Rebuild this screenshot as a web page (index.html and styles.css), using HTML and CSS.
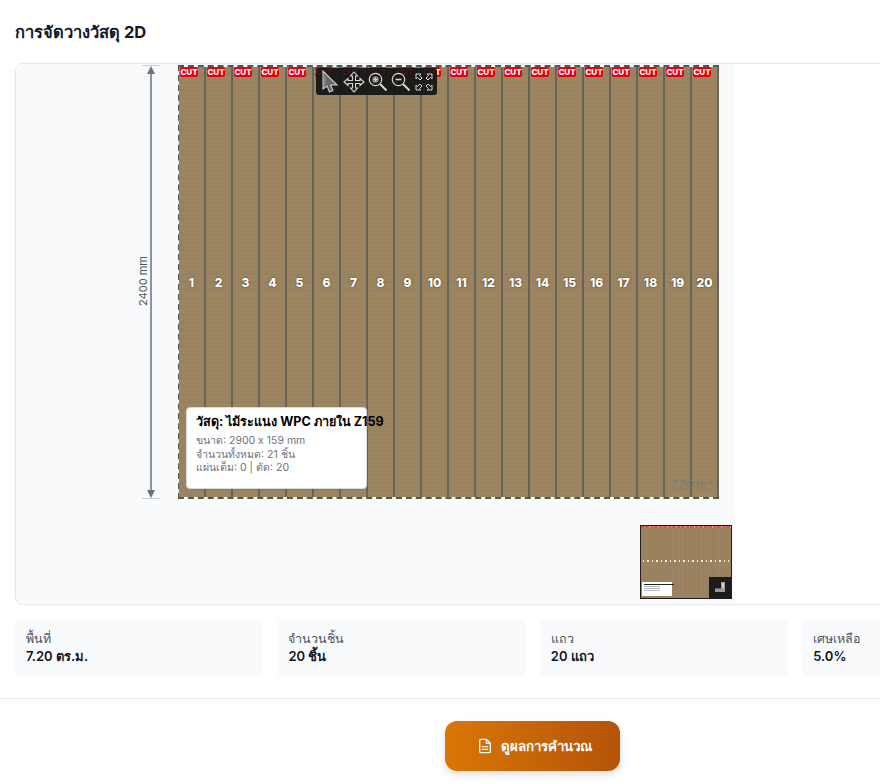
FILE: index.html
```html
<!DOCTYPE html>
<html lang="th">
<head>
    <meta charset="UTF-8">
    <meta name="viewport" content="width=device-width, initial-scale=1.0">
    <title>การจัดวางวัสดุ 2D</title>
    <link rel="stylesheet" href="styles.css">
</head>
<body>
    <div id="page">
        <h2 id="title">การจัดวางวัสดุ 2D</h2>

        <div id="viewer">
            <div id="canvas">
                <svg class="dim-line" width="20" height="436" viewBox="0 0 20 436">
                    <path d="M1 1.500H19M1 434.500H19" stroke="#c9ccd3" stroke-width="1" fill="none"/>
                    <path d="M10 6V430" stroke="#6b7280" stroke-width="1.500" fill="none"/>
                    <path d="M10 2L14 10H6ZM10 434L14 426H6Z" fill="#6b7280"/>
                </svg>
                <div class="dim-label">2400 mm</div>

                <div id="board">
                    <div class="strip"><span class="cut">CUT</span><span class="num">1</span></div>
                    <div class="strip"><span class="cut">CUT</span><span class="num">2</span></div>
                    <div class="strip"><span class="cut">CUT</span><span class="num">3</span></div>
                    <div class="strip"><span class="cut">CUT</span><span class="num">4</span></div>
                    <div class="strip"><span class="cut">CUT</span><span class="num">5</span></div>
                    <div class="strip"><span class="cut">CUT</span><span class="num">6</span></div>
                    <div class="strip"><span class="cut">CUT</span><span class="num">7</span></div>
                    <div class="strip"><span class="cut">CUT</span><span class="num">8</span></div>
                    <div class="strip"><span class="cut">CUT</span><span class="num">9</span></div>
                    <div class="strip"><span class="cut">CUT</span><span class="num">10</span></div>
                    <div class="strip"><span class="cut">CUT</span><span class="num">11</span></div>
                    <div class="strip"><span class="cut">CUT</span><span class="num">12</span></div>
                    <div class="strip"><span class="cut">CUT</span><span class="num">13</span></div>
                    <div class="strip"><span class="cut">CUT</span><span class="num">14</span></div>
                    <div class="strip"><span class="cut">CUT</span><span class="num">15</span></div>
                    <div class="strip"><span class="cut">CUT</span><span class="num">16</span></div>
                    <div class="strip"><span class="cut">CUT</span><span class="num">17</span></div>
                    <div class="strip"><span class="cut">CUT</span><span class="num">18</span></div>
                    <div class="strip"><span class="cut">CUT</span><span class="num">19</span></div>
                    <div class="strip"><span class="cut">CUT</span><span class="num">20</span></div>
                    <div class="area-note">7.20 m²</div>
                </div>

                <div id="legend">
                    <div class="legend-title">วัสดุ: ไม้ระแนง WPC ภายใน Z159</div>
                    <div class="legend-line">ขนาด: 2900 x 159 mm</div>
                    <div class="legend-line">จำนวนทั้งหมด: 21 ชิ้น</div>
                    <div class="legend-line">แผ่นเต็ม: 0 | ตัด: 20</div>
                </div>

                <div id="toolbar">
                    <svg width="20" height="24" viewBox="0 0 20 24" fill="none" stroke="#cfcfcf" stroke-width="1.100">
                        <path d="M3 1L3 19L7 16L9.500 22L13 20.500L10.500 15L17 15Z" fill="#666"/>
                        <path d="M5 6V15" stroke="#999"/>
                    </svg>
                    <svg width="22" height="22" viewBox="0 0 22 22" fill="none" stroke="#d6d6d6" stroke-width="1.100">
                        <path d="M11 1L14.500 5H12.500V9.500H17V7.500L21 11L17 14.500V12.500H12.500V17H14.500L11 21L7.500 17H9.500V12.500H5V14.500L1 11L5 7.500V9.500H9.500V5H7.500Z"/>
                    </svg>
                    <svg width="20" height="20" viewBox="0 0 20 20" fill="none" stroke="#d6d6d6">
                        <circle cx="7.500" cy="7.500" r="6.200" stroke-width="1.200"/>
                        <circle cx="7.500" cy="7.500" r="3.200" fill="#8c8c8c" stroke="none"/>
                        <path d="M5.500 7.500H9.500M7.500 5.500V9.500" stroke-width="1"/>
                        <path d="M12 12L18.500 18.500" stroke-width="2"/>
                    </svg>
                    <svg width="20" height="20" viewBox="0 0 20 20" fill="none" stroke="#d6d6d6">
                        <circle cx="7.500" cy="7.500" r="6.200" stroke-width="1.200"/>
                        <path d="M4.500 7.500H10.500" stroke-width="1.500"/>
                        <path d="M12 12L18.500 18.500" stroke-width="2"/>
                    </svg>
                    <svg width="20" height="20" viewBox="0 0 20 20" fill="none" stroke="#d6d6d6" stroke-width="1">
                        <path d="M2 2H7L5.500 3.500L8 6L6 8L3.500 5.500L2 7Z"/>
                        <path d="M18 2V7L16.500 5.500L14 8L12 6L14.500 3.500L13 2Z"/>
                        <path d="M2 18V13L3.500 14.500L6 12L8 14L5.500 16.500L7 18Z"/>
                        <path d="M18 18H13L14.500 16.500L12 14L14 12L16.500 14.500L18 13Z"/>
                    </svg>
                </div>

                <div id="minimap">
                    <div class="mini-cut"></div>
                    <div class="mini-nums"></div>
                    <div class="mini-legend">
                        <i class="mini-bar dark"></i>
                        <i class="mini-bar"></i>
                        <i class="mini-bar"></i>
                        <i class="mini-bar"></i>
                    </div>
                    <div class="mini-corner">
                        <svg width="12" height="11" viewBox="0 0 12 11"><path d="M7 0H11V10H1V6.500H7Z" fill="#9a9a9a"/><path d="M8 1H10V6H8Z" fill="#cfcfcf"/></svg>
                    </div>
                </div>
            </div>
        </div>

        <div id="stats">
            <div class="stat">
                <div class="stat-label">พื้นที่</div>
                <div class="stat-value">7.20 ตร.ม.</div>
            </div>
            <div class="stat">
                <div class="stat-label">จำนวนชิ้น</div>
                <div class="stat-value">20 ชิ้น</div>
            </div>
            <div class="stat">
                <div class="stat-label">แถว</div>
                <div class="stat-value">20 แถว</div>
            </div>
            <div class="stat">
                <div class="stat-label">เศษเหลือ</div>
                <div class="stat-value">5.0%</div>
            </div>
        </div>

        <div id="actions">
            <button class="action-button">
                <svg width="16" height="16" viewBox="0 0 24 24" fill="none" stroke="#fff" stroke-width="2" stroke-linecap="round" stroke-linejoin="round">
                    <path d="M14 2H6a2 2 0 0 0-2 2v16a2 2 0 0 0 2 2h12a2 2 0 0 0 2-2V8z"/>
                    <path d="M14 2v6h6M8 13h8M8 17h8"/>
                </svg>
                ดูผลการคำนวณ
            </button>
        </div>
    </div>
</body>
</html>
```

FILE: styles.css
```css
html, body {
    margin: 0;
    height: 784px;
    overflow: hidden;
    background: #fff;
    font-family: Inter, "Noto Sans", "DejaVu Sans", sans-serif;
    color: #111827;
}
#page {
    padding: 22px 0 0 15px;
    width: 1100px;
}
#title {
    margin: 0 0 20px;
    font-size: 16.500px;
    line-height: 21px;
    font-weight: 700;
}
#viewer {
    width: 1034px;
    height: 540px;
    border: 1px solid #e5e7eb;
    border-radius: 8px;
    overflow: hidden;
}
#canvas {
    position: relative;
    width: 719px;
    height: 540px;
    background: #f8fafc;
}
.dim-line {
    position: absolute;
    left: 125px;
    top: 0;
}
.dim-label {
    position: absolute;
    left: 127px;
    top: 210px;
    transform: translateX(-50%) rotate(-90deg);
    font-size: 11px;
    line-height: 14px;
    color: #4b5563;
    white-space: nowrap;
}
#board {
    position: absolute;
    left: 162px;
    top: 1px;
    width: 541px;
    height: 434px;
    box-sizing: border-box;
    display: flex;
    border: 2px dashed #565656;
    background: #9c8360;
    background-clip: padding-box;
}
.strip {
    width: 27px;
    flex: none;
    box-sizing: border-box;
    display: flex;
    align-items: center;
    justify-content: center;
    position: relative;
    border-right: 2px solid #66625c;
    background: repeating-linear-gradient(180deg, #9d8461 0, #9d8461 6px, #94805d 7px, #94805d 8px);
}
.strip:first-child {
    margin-left: -1px;
}
.strip:last-of-type {
    border-right: none;
}
.cut {
    position: absolute;
    top: 0;
    left: 1px;
    width: 18px;
    height: 10px;
    border-radius: 2px;
    background: #e3000f;
    color: #fff;
    font-size: 8px;
    font-weight: 800;
    line-height: 10px;
    text-align: center;
}
.num {
    font-size: 12px;
    font-weight: 800;
    color: #fff;
    text-shadow: 0 0 2px rgba(0, 0, 0, 0.6);
}
.area-note {
    position: absolute;
    right: 5px;
    bottom: 5px;
    font-size: 11.500px;
    font-style: italic;
    color: #7f7a72;
}
#legend {
    position: absolute;
    left: 170px;
    top: 343px;
    width: 181px;
    height: 82px;
    box-sizing: border-box;
    padding: 5px 9px;
    background: #fff;
    border: 1px solid #d9d9d9;
    border-radius: 4px;
}
.legend-title {
    font-size: 12.600px;
    font-weight: 700;
    line-height: 17px;
    color: #000;
    white-space: nowrap;
    margin-bottom: 4px;
}
.legend-line {
    font-size: 10.500px;
    line-height: 13.500px;
    color: #6b7280;
    white-space: nowrap;
}
#toolbar {
    position: absolute;
    left: 300px;
    top: 4px;
    width: 121px;
    height: 27px;
    box-sizing: border-box;
    padding: 0 3px 0 4px;
    display: flex;
    align-items: center;
    justify-content: space-between;
    background: rgba(20, 20, 20, 0.92);
    border-radius: 3px;
}
#minimap {
    position: absolute;
    left: 624px;
    top: 461px;
    width: 92px;
    height: 74px;
    box-sizing: border-box;
    border: 1px solid #1f1f1f;
    overflow: hidden;
    background: repeating-linear-gradient(90deg, #9c8360 0, #9c8360 3px, #927c5c 4.500px);
}
.mini-cut {
    position: absolute;
    left: 0;
    right: 0;
    top: 0;
    height: 2px;
    background: repeating-linear-gradient(90deg, #d9534f 0, #d9534f 3px, #f1c9b8 4.500px);
}
.mini-nums {
    position: absolute;
    left: 2px;
    right: 2px;
    top: 34px;
    height: 2px;
    background: repeating-linear-gradient(90deg, #f5efe4 0, #f5efe4 1.500px, transparent 1.500px, transparent 4.500px);
}
.mini-legend {
    position: absolute;
    left: 1px;
    bottom: 2px;
    width: 30px;
    height: 14px;
    box-sizing: border-box;
    padding: 2px;
    background: #fff;
    display: flex;
    flex-direction: column;
    gap: 1px;
}
.mini-bar {
    display: block;
    width: 16px;
    height: 1px;
    background: #b5b8bf;
}
.mini-bar.dark {
    width: 30px;
    background: #222;
}
.mini-corner {
    position: absolute;
    right: 0;
    bottom: 0;
    width: 22px;
    height: 21px;
    background: #1c1c1c;
    display: flex;
    align-items: center;
    justify-content: center;
}
#stats {
    display: grid;
    grid-template-columns: repeat(4, 248px);
    column-gap: 14.400px;
    margin-top: 14px;
}
.stat {
    height: 58px;
    box-sizing: border-box;
    padding: 11px 11px 0;
    background: #f9fafb;
    border-radius: 6px;
}
.stat-label {
    font-size: 12.500px;
    line-height: 17px;
    color: #4b5563;
}
.stat-value {
    font-size: 13px;
    line-height: 18px;
    font-weight: 600;
    color: #111827;
}
#actions {
    margin: 21px 0 0 -15px;
    width: 1065px;
    border-top: 1px solid #e5e7eb;
    padding-top: 22px;
    display: flex;
    justify-content: center;
}
.action-button {
    width: 175px;
    height: 50px;
    padding: 0 0 0 4px;
    border: none;
    border-radius: 12px;
    background: linear-gradient(90deg, #d97706, #b45309);
    box-shadow: 0 4px 8px rgba(0, 0, 0, 0.12);
    color: #fff;
    font-family: inherit;
    font-size: 13.300px;
    font-weight: 600;
    display: flex;
    align-items: center;
    justify-content: center;
    gap: 8px;
    cursor: pointer;
}
```
